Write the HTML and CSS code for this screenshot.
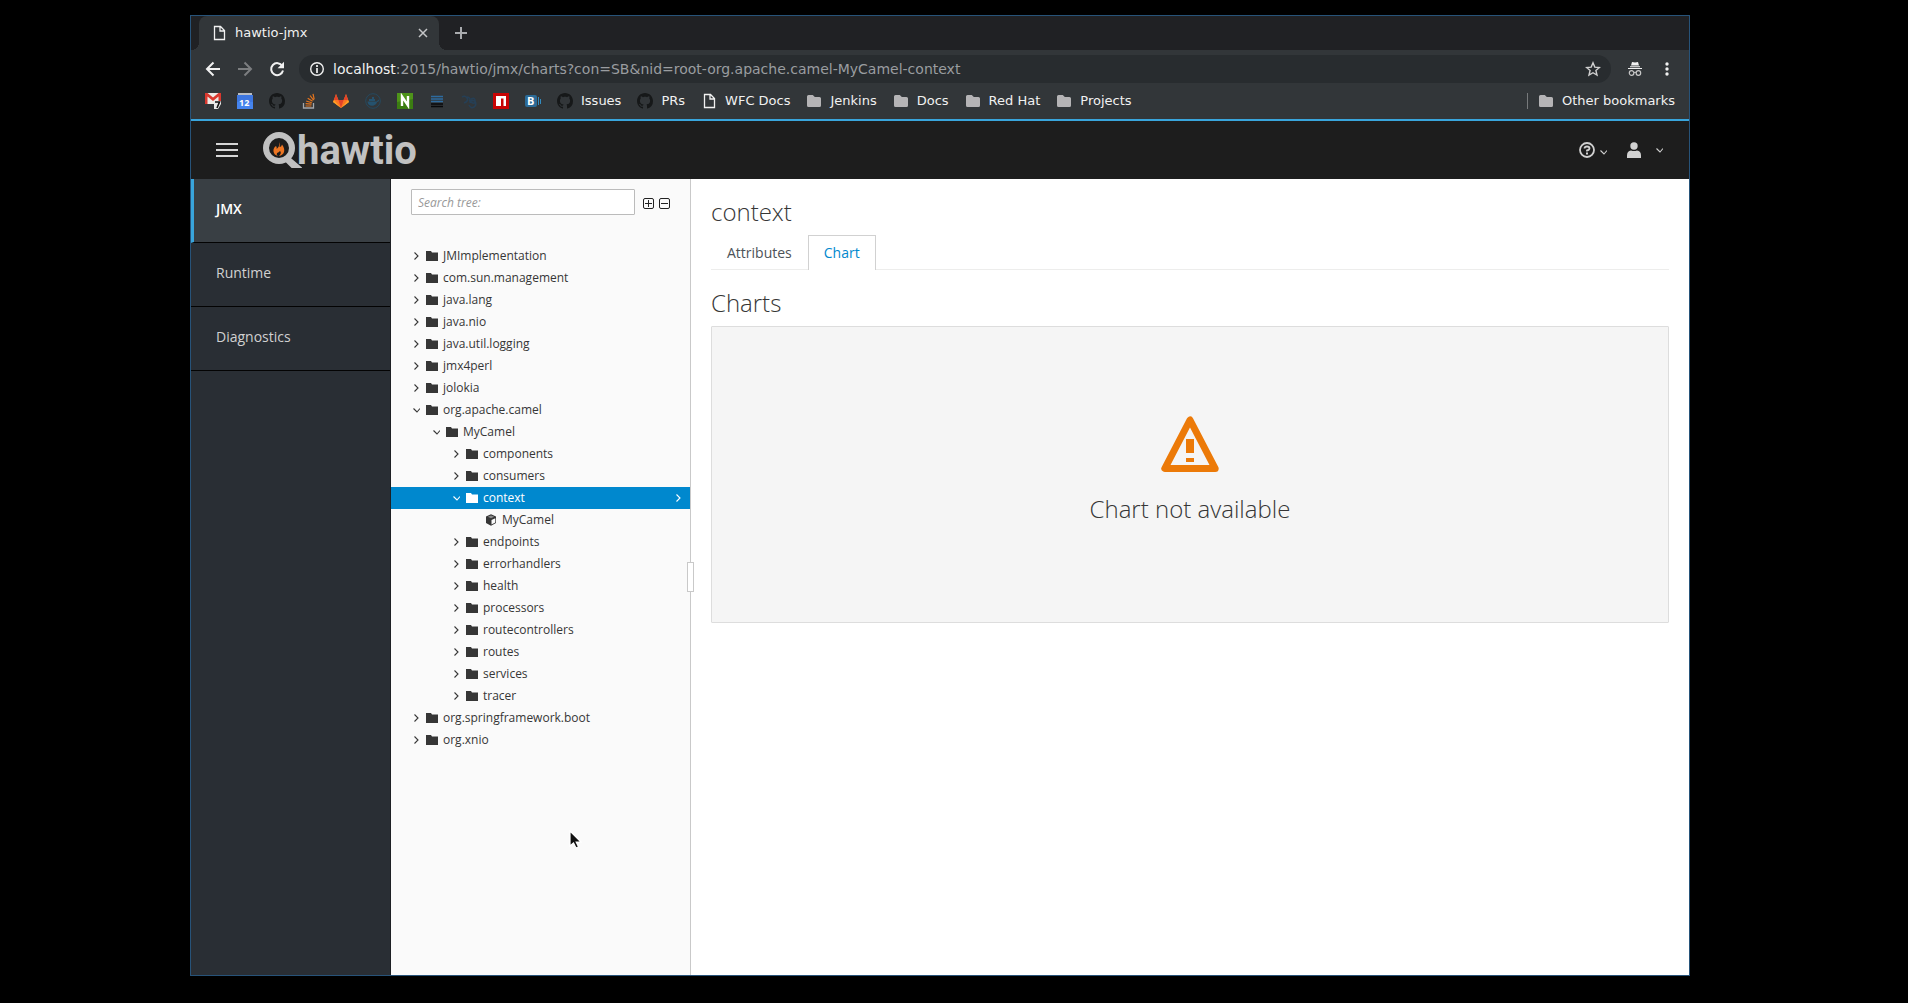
FILE: index.html
```html
<!DOCTYPE html>
<html lang="en">
<head>
<meta charset="utf-8">
<title>hawtio-jmx</title>
<link rel="stylesheet" href="styles.css">
</head>
<body>
<svg class="defs" aria-hidden="true">
  <symbol id="right" viewBox="0 0 8 12"><path d="M2.500 2.500L6 6L2.500 9.500" fill="none" stroke="currentColor" stroke-width="1.100"/></symbol>
  <symbol id="down" viewBox="0 0 8 12"><path d="M1.500 4.500L5 8L8 4.500" fill="none" stroke="currentColor" stroke-width="1.100"/></symbol>
  <symbol id="folder" viewBox="0 0 12 12"><path d="M0 1h5l1 1.500h6V11H0z" fill="currentColor"/></symbol>
  <symbol id="bfolder" viewBox="0 0 16 16"><path d="M2.500 2h4.300l2 2h4.700q1.500 0 1.500 1.500v7q0 1.500-1.500 1.500h-11Q1 14 1 12.500v-9Q1 2 2.500 2z" fill="#b5b4b6"/></symbol>
  <symbol id="page" viewBox="0 0 16 16"><path d="M3.500 1.500h6l4 4v9h-10zM9 1.500v4.500h4.500" fill="none" stroke="#f1f1f1" stroke-width="1.300"/></symbol>
  <symbol id="github" viewBox="0 0 16 16"><path fill="#161819" d="M8 0C3.580 0 0 3.580 0 8c0 3.540 2.290 6.530 5.470 7.590.4.070.55-.17.55-.38 0-.19-.01-.82-.01-1.490-2.010.37-2.530-.49-2.690-.94-.09-.23-.48-.94-.82-1.130-.28-.15-.68-.52-.01-.53.63-.01 1.080.58 1.230.82.72 1.210 1.870.87 2.330.66.07-.52.28-.87.51-1.070-1.780-.2-3.640-.89-3.640-3.950 0-.87.31-1.590.82-2.150-.08-.2-.36-1.020.08-2.120 0 0 .67-.21 2.200.82.64-.18 1.320-.27 2-.27s1.360.09 2 .27c1.530-1.040 2.200-.82 2.200-.82.44 1.100.16 1.920.08 2.120.51.56.82 1.270.82 2.150 0 3.070-1.870 3.750-3.650 3.950.29.25.54.73.54 1.480 0 1.070-.01 1.930-.01 2.200 0 .21.15.46.55.38A8.010 8.010 0 0 0 16 8c0-4.420-3.580-8-8-8z"/></symbol>
</svg>

<div class="window">
  <header class="chrome">
    <div class="tabstrip">
      <div class="browser-tab">
        <svg class="i16"><use href="#page"/></svg>
        <span class="tab-title">hawtio-jmx</span>
        <button class="plain" aria-label="Close tab"><svg width="10" height="10" viewBox="0 0 10 10"><path d="M1 1l8 8M9 1L1 9" stroke="#c5c6c8" stroke-width="1.500"/></svg></button>
      </div>
      <button class="plain new-tab" aria-label="New tab"><svg width="12" height="12" viewBox="0 0 12 12"><path d="M6 0v12M0 6h12" stroke="#a9abae" stroke-width="2"/></svg></button>
    </div>
    <div class="toolbar">
      <button class="plain" aria-label="Back"><svg class="i16" viewBox="0 0 16 16"><path d="M15 8H2.500M8.500 1.500L2 8l6.500 6.500" fill="none" stroke="#f1f1f1" stroke-width="2"/></svg></button>
      <button class="plain" aria-label="Forward"><svg class="i16" viewBox="0 0 16 16"><path d="M1 8h12.500M7.500 1.500L14 8l-6.500 6.500" fill="none" stroke="#7c7e80" stroke-width="2"/></svg></button>
      <button class="plain" aria-label="Reload"><svg class="i16" viewBox="0 0 16 16"><path d="M13.300 5A6 6 0 1 0 14 9.500" fill="none" stroke="#f1f1f1" stroke-width="2"/><path d="M15 .8v6.400H8.600z" fill="#f1f1f1"/></svg></button>
      <div class="omnibox">
        <svg class="i16" viewBox="0 0 16 16"><circle cx="8" cy="8" r="6.300" fill="none" stroke="#f1f1f1" stroke-width="1.400"/><path d="M8 7v5M8 4v2" stroke="#f1f1f1" stroke-width="1.700"/></svg>
        <span class="url"><b>localhost</b>:2015/hawtio/jmx/charts?con=SB&amp;nid=root-org.apache.camel-MyCamel-context</span>
        <button class="plain" aria-label="Bookmark this page"><svg class="i16" viewBox="0 0 16 16"><path d="M8 1.800l1.800 4.300 4.600.4-3.500 3 1.100 4.600L8 11.700l-4 2.400 1.100-4.600-3.500-3 4.600-.4z" fill="none" stroke="#d0d0d0" stroke-width="1.400"/></svg></button>
      </div>
      <svg class="i16" viewBox="0 0 16 16"><path d="M5 1l3 .6L11 1l1 3.500H4zM3 5.200h10v1H3zM1 7h14v1H1z" fill="#f1f1f1"/><circle cx="4.600" cy="12" r="2.300" fill="none" stroke="#c8c8c8" stroke-width="1.200"/><circle cx="11.400" cy="12" r="2.300" fill="none" stroke="#c8c8c8" stroke-width="1.200"/><path d="M6.800 11.600q1.200-.8 2.400 0" stroke="#c8c8c8" fill="none"/></svg>
      <button class="plain" aria-label="Menu"><svg class="i16" viewBox="0 0 16 16"><g fill="#f1f1f1"><circle cx="8" cy="3" r="1.700"/><circle cx="8" cy="8" r="1.700"/><circle cx="8" cy="13" r="1.700"/></g></svg></button>
    </div>
    <nav class="bookmarks" aria-label="Bookmarks">
      <a href="#" aria-label="Mail"><svg class="i16" viewBox="0 0 16 16"><path d="M0 0h16v11H0z" fill="#eceae6"/><path d="M0 0h2.500L8 4.500 13.500 0H16v11h-2.500V3.500L8 8 2.500 3.500V11H0z" fill="#d9382e"/><path d="M9 8h7v3l-3 5H9z" fill="#e9e9e9"/><path d="M10 9h4.500l-2.500 6" stroke="#111" stroke-width="1.600" fill="none"/></svg></a>
      <a href="#" aria-label="Calendar"><svg class="i16" viewBox="0 0 16 16"><path d="M1 0h14v3H1z" fill="#b9bcc2"/><path d="M0 2h16v14H0z" fill="#3d76e0"/><path d="M0 9h16v7H0z" fill="#4584ee"/><text class="cal" x="2" y="13">12</text></svg></a>
      <a href="#" aria-label="GitHub"><svg class="i16"><use href="#github"/></svg></a>
      <a href="#" aria-label="Stack Overflow"><svg class="i16" viewBox="0 0 16 16"><path d="M2.500 10v5h10v-5" fill="none" stroke="#a4a7aa" stroke-width="1.300"/><path d="M4.500 13h6M4.600 10.600l6 .6M5.200 8l5.600 1.700M6.700 5.200l4.900 3M9 2.500l3.600 4.700M12 .8l1.200 5.600" stroke="#e7751c" stroke-width="1.200"/></svg></a>
      <a href="#" aria-label="GitLab"><svg class="i16" viewBox="0 0 16 16"><path d="M8 15L0 9l3-8 2.400 6h5.200L13 1l3 8z" fill="#fc7424"/><path d="M5.400 7h5.200L8 15z" fill="#e24329"/><path d="M3 1l2.400 6H1zM13 1l-2.400 6H15z" fill="#e24329"/><path d="M0 9l1-2 7 8zM16 9l-1-2-7 8z" fill="#fca326"/></svg></a>
      <a href="#" aria-label="Docker"><svg class="i16" viewBox="0 0 16 16"><circle cx="8" cy="8" r="7.300" fill="none" stroke="#25495f"/><path d="M2.500 8.500h9q1.200 0 1.500-2 1 .6 1 1.300-.7 1.200-1.900 1.200-1.500 3.800-5 3.800-4.200 0-4.600-4.300zM4 6h6v2H4zM7 4h2v2H7z" fill="#25526e"/></svg></a>
      <a href="#" aria-label="Nexus"><svg class="i16" viewBox="0 0 16 16"><path d="M0 0h16v16H0z" fill="#4e941a"/><path d="M0 9l16-3v10H0z" fill="#3b7d12"/><path d="M5 13V3.500l6 9V3" fill="none" stroke="#fff" stroke-width="2.400"/></svg></a>
      <a href="#" aria-label="Lists"><svg class="i16" viewBox="0 0 16 16"><path d="M2 3.500h12M2 6h12M2 8.500h12" stroke="#2e6b9f" stroke-width="1.400"/><path d="M2 11h12M2 13.500h12" stroke="#08090b" stroke-width="1.400"/></svg></a>
      <a href="#" aria-label="Wiki"><svg class="i16" viewBox="0 0 16 16"><path d="M1 4q3-2 5 1t-3 5M6 4q4 0 3 6M10 6q4-2 4 2t-4 1 4-1q2 4-1 6t-5-2" fill="none" stroke="#263f55" stroke-width="1.600"/></svg></a>
      <a href="#" aria-label="npm"><svg class="i16" viewBox="0 0 16 16"><path d="M0 0h16v16H0z" fill="#c80404"/><path d="M3 3h10v10h-2.500V5.500H8V13H3z" fill="#fff"/></svg></a>
      <a href="#" aria-label="Blog"><svg class="i16" viewBox="0 0 16 16"><rect y="2" width="12" height="12" rx="2" fill="#2b6b98"/><path d="M13 4h1v8h-1zM15 6h1v5h-1z" fill="#328bc0"/><text class="blog" x="2" y="12">B</text></svg></a>
      <a href="#"><svg class="i16"><use href="#github"/></svg>Issues</a>
      <a href="#"><svg class="i16"><use href="#github"/></svg>PRs</a>
      <a href="#"><svg class="i16"><use href="#page"/></svg>WFC Docs</a>
      <a href="#"><svg class="i16"><use href="#bfolder"/></svg>Jenkins</a>
      <a href="#"><svg class="i16"><use href="#bfolder"/></svg>Docs</a>
      <a href="#"><svg class="i16"><use href="#bfolder"/></svg>Red Hat</a>
      <a href="#"><svg class="i16"><use href="#bfolder"/></svg>Projects</a>
      <a href="#" class="other"><svg class="i16"><use href="#bfolder"/></svg>Other bookmarks</a>
    </nav>
  </header>

  <div class="masthead">
    <button class="plain" aria-label="Toggle navigation"><svg width="22" height="14" viewBox="0 0 22 14"><path d="M0 1h22M0 7h22M0 13h22" stroke="#d6d6d6" stroke-width="2"/></svg></button>
    <a href="#" class="brand">
      <svg width="39" height="36" viewBox="0 0 39 36"><circle cx="16" cy="16" r="13" fill="none" stroke="#c1c1c1" stroke-width="6"/><path d="M24 24l13 11H29l-7-7z" fill="#c1c1c1" stroke="#c1c1c1" stroke-width="2"/><path d="M31 23l8 9" stroke="#1d1d1d" stroke-width="1"/><path d="M16 9q2 3 .5 6 2 0 2.500-2.500 3 4 2 7.500-1 3-5 4 3-3 1-5-2 2-3 2-1 2 1 3-4-1-4.500-4.500Q10 16 13 14q1 1 .7 3Q18 13 16 9z" fill="#ee7623"/></svg>
      <span>hawtio</span>
    </a>
    <div class="utilities">
      <button class="plain help" aria-label="Help"><svg class="i16" viewBox="0 0 16 16"><circle cx="8" cy="8" r="7" fill="none" stroke="#d1d1d1" stroke-width="1.800"/><path d="M5.500 6.500Q5.500 4.500 8 4.500t2.500 1.800Q10.500 8 8 8.500v1" fill="none" stroke="#d1d1d1" stroke-width="1.800"/><path d="M7 10.500h2v2H7z" fill="#d1d1d1"/></svg><svg class="caret low"><use href="#down"/></svg></button>
      <button class="plain user" aria-label="User"><svg width="14" height="16" viewBox="0 0 14 16"><circle cx="7" cy="4" r="3.700" fill="#d1d1d1"/><path d="M0 16v-2.500Q0 9 4 8.500q3 1 6 0 4 .5 4 5V16z" fill="#d1d1d1"/></svg><svg class="caret"><use href="#down"/></svg></button>
    </div>
  </div>

  <div class="app">
    <nav class="sidebar" aria-label="Main">
      <a href="#" class="active">JMX</a>
      <a href="#">Runtime</a>
      <a href="#">Diagnostics</a>
    </nav>

    <aside class="tree-pane">
      <div class="search">
        <input type="text" placeholder="Search tree:" aria-label="Search tree">
        <button class="plain" aria-label="Expand all"><svg width="11" height="11" viewBox="0 0 11 11"><rect x=".5" y=".5" width="10" height="10" rx="1.500" fill="none" stroke="#222"/><path d="M5.500 2v7M2 5.500h7" stroke="#222"/></svg></button>
        <button class="plain" aria-label="Collapse all"><svg width="11" height="11" viewBox="0 0 11 11"><rect x=".5" y=".5" width="10" height="10" rx="1.500" fill="none" stroke="#222"/><path d="M2 5.500h7" stroke="#222"/></svg></button>
      </div>
      <ul class="tree">
        <li><svg class="caret"><use href="#right"/></svg><svg class="node"><use href="#folder"/></svg>JMImplementation</li>
        <li><svg class="caret"><use href="#right"/></svg><svg class="node"><use href="#folder"/></svg>com.sun.management</li>
        <li><svg class="caret"><use href="#right"/></svg><svg class="node"><use href="#folder"/></svg>java.lang</li>
        <li><svg class="caret"><use href="#right"/></svg><svg class="node"><use href="#folder"/></svg>java.nio</li>
        <li><svg class="caret"><use href="#right"/></svg><svg class="node"><use href="#folder"/></svg>java.util.logging</li>
        <li><svg class="caret"><use href="#right"/></svg><svg class="node"><use href="#folder"/></svg>jmx4perl</li>
        <li><svg class="caret"><use href="#right"/></svg><svg class="node"><use href="#folder"/></svg>jolokia</li>
        <li><svg class="caret"><use href="#down"/></svg><svg class="node"><use href="#folder"/></svg>org.apache.camel</li>
        <li class="l2"><svg class="caret"><use href="#down"/></svg><svg class="node"><use href="#folder"/></svg>MyCamel</li>
        <li class="l3"><svg class="caret"><use href="#right"/></svg><svg class="node"><use href="#folder"/></svg>components</li>
        <li class="l3"><svg class="caret"><use href="#right"/></svg><svg class="node"><use href="#folder"/></svg>consumers</li>
        <li class="l3 selected"><svg class="caret"><use href="#down"/></svg><svg class="node"><use href="#folder"/></svg>context<svg class="caret go"><use href="#right"/></svg></li>
        <li class="l4"><svg class="node" viewBox="0 0 12 12"><path d="M6 .3l5 2.200v6.500L6 11.700 1 9V2.500z" fill="#363636"/><path d="M6.500 6l3.800-1.800v4.200L6.500 10.500z" fill="#fafafa"/><path d="M6 1.400l3.300 1.400L6 4.300 2.700 2.800z" fill="#8a8a8a"/></svg>MyCamel</li>
        <li class="l3"><svg class="caret"><use href="#right"/></svg><svg class="node"><use href="#folder"/></svg>endpoints</li>
        <li class="l3"><svg class="caret"><use href="#right"/></svg><svg class="node"><use href="#folder"/></svg>errorhandlers</li>
        <li class="l3"><svg class="caret"><use href="#right"/></svg><svg class="node"><use href="#folder"/></svg>health</li>
        <li class="l3"><svg class="caret"><use href="#right"/></svg><svg class="node"><use href="#folder"/></svg>processors</li>
        <li class="l3"><svg class="caret"><use href="#right"/></svg><svg class="node"><use href="#folder"/></svg>routecontrollers</li>
        <li class="l3"><svg class="caret"><use href="#right"/></svg><svg class="node"><use href="#folder"/></svg>routes</li>
        <li class="l3"><svg class="caret"><use href="#right"/></svg><svg class="node"><use href="#folder"/></svg>services</li>
        <li class="l3"><svg class="caret"><use href="#right"/></svg><svg class="node"><use href="#folder"/></svg>tracer</li>
        <li><svg class="caret"><use href="#right"/></svg><svg class="node"><use href="#folder"/></svg>org.springframework.boot</li>
        <li><svg class="caret"><use href="#right"/></svg><svg class="node"><use href="#folder"/></svg>org.xnio</li>
      </ul>
      <div class="grip"></div>
      <svg class="pointer" width="14" height="20" viewBox="0 0 14 20"><path d="M1 1v15l3.500-3 2.500 5 2.500-1.200L7.200 12H12z" fill="#111" stroke="#fff" stroke-width="1.200"/></svg>
    </aside>

    <main class="content">
      <h1>context</h1>
      <nav class="tabs" aria-label="Views">
        <a href="#">Attributes</a>
        <a href="#" class="active">Chart</a>
      </nav>
      <h2>Charts</h2>
      <section class="blank">
        <svg width="58" height="57" viewBox="0 0 58 57"><path d="M29 4L3.800 52.500h50.400z" fill="none" stroke="#ec7a08" stroke-width="7" stroke-linejoin="round"/><path d="M25 23h8v14h-8zM25 42h8v4h-8z" fill="#ec7a08"/></svg>
        <p>Chart not available</p>
      </section>
    </main>
  </div>
</div>
</body>
</html>
```
FILE: styles.css
```css
* { box-sizing: border-box; }

body {
  margin: 0;
  min-height: 100vh;
  padding: 15px 218px 27px 190px;
  display: flex;
  background: #000;
  font-family: "Open Sans", sans-serif;
  font-size: 12px;
  color: #363636;
}

svg { display: block; flex: none; }
.defs { position: absolute; width: 0; height: 0; }
.i16 { width: 16px; height: 16px; }
a { text-decoration: none; color: inherit; }

.plain {
  display: flex;
  align-items: center;
  padding: 0;
  border: 0;
  background: none;
  color: inherit;
}

.window {
  flex: 1;
  min-width: 0;
  display: flex;
  flex-direction: column;
  border: 1px solid #275379;
}

/* Browser chrome */
.chrome {
  background: #323639;
  color: #f1f1f1;
  font-family: "DejaVu Sans", sans-serif;
  font-size: 13px;
}

.tabstrip {
  display: flex;
  height: 34px;
  padding-left: 8px;
  background: #202124;
}

.browser-tab {
  position: relative;
  display: flex;
  align-items: center;
  gap: 8px;
  width: 240px;
  padding: 0 11px 0 12px;
  border-radius: 8px 8px 0 0;
  background: #323639;
}

.browser-tab::before,
.browser-tab::after {
  content: "";
  position: absolute;
  bottom: 0;
  width: 8px;
  height: 8px;
}
.browser-tab::before { right: 100%; background: radial-gradient(circle at 0 0, #202124 8px, #323639 8px); }
.browser-tab::after { left: 100%; background: radial-gradient(circle at 100% 0, #202124 8px, #323639 8px); }

.tab-title { flex: 1; padding-bottom: 2px; }
.new-tab { padding: 0 16px; }

.toolbar {
  display: flex;
  align-items: center;
  gap: 16px;
  padding: 5px 14px 4px;
}

.omnibox {
  flex: 1;
  display: flex;
  align-items: center;
  gap: 8px;
  height: 28px;
  margin-left: -2px;
  padding: 0 10px;
  border-radius: 14px;
  background: #282c2f;
  font-size: 14px;
}

.url { flex: 1; color: #9a9da0; }
.url b { font-weight: 400; color: #f1f1f1; }

.bookmarks {
  display: flex;
  align-items: center;
  gap: 16px;
  height: 32px;
  padding: 0 14px 5px;
}
.bookmarks a { display: flex; align-items: center; gap: 8px; white-space: nowrap; }
.bookmarks .other { margin-left: auto; padding-left: 10px; border-left: 1px solid #777a7c; }
.cal { font: 700 9px "Open Sans", sans-serif; fill: #fff; }
.blog { font: 700 11px "Open Sans", sans-serif; fill: #fff; }

/* Application header */
.masthead {
  display: flex;
  align-items: center;
  height: 60px;
  padding: 0 26px 0 25px;
  border-top: 2px solid #39a5dc;
  background: #1d1d1d;
}

.brand {
  display: flex;
  align-items: center;
  margin-left: 25px;
  color: #c1c1c1;
  font: 700 40px/40px Roboto, sans-serif;
}
.brand span { margin-left: -5px; padding-top: 2px; }

.utilities { display: flex; gap: 20px; margin-left: auto; color: #d1d1d1; }
.help { gap: 4px; }
.user { gap: 14px; }
.caret { width: 8px; height: 12px; }
.low { margin-top: 4px; }

.app { flex: 1; display: flex; }

.sidebar {
  width: 200px;
  background: #292e34;
  border-right: 1px solid #1d2024;
  font-size: 14px;
}
.sidebar a {
  display: flex;
  align-items: center;
  height: 64px;
  padding: 0 0 4px 25px;
  border-bottom: 1px solid #030303;
  color: #d1d1d1;
}
.sidebar .active {
  padding-left: 22px;
  border-left: 3px solid #39a5dc;
  background: #393f44;
  color: #fff;
  font-weight: 600;
}

/* Tree */
.tree-pane {
  position: relative;
  width: 300px;
  padding-top: 10px;
  border-right: 1px solid #c9c9c9;
  background: #fafafa;
}

.search { display: flex; align-items: center; gap: 5px; padding-left: 20px; }
.search input {
  width: 224px;
  height: 26px;
  margin-right: 3px;
  padding: 0 6px;
  border: 1px solid #bbb;
  border-radius: 1px;
  background: #fff;
  font: 12px "Open Sans", sans-serif;
}
.search .plain { padding-top: 2px; }
.search input::placeholder { color: #999; font-style: italic; }

.tree { margin: 30px 0 0; padding: 0; list-style: none; }
.tree li {
  display: flex;
  align-items: center;
  height: 22px;
  padding: 0 0 1px 21px;
}
.tree .l2 { padding-left: 41px; }
.tree .l3 { padding-left: 61px; }
.tree .l4 { padding-left: 94px; }
.tree .selected { background: #0088ce; color: #fff; }
.node { width: 12px; height: 12px; margin: 0 5px 0 6px; }
.l4 .node { margin-left: 0; }
.go { margin: 0 8px 0 auto; }

.grip {
  position: absolute;
  top: calc(50% - 15px);
  right: -4px;
  width: 7px;
  height: 30px;
  border: 1px solid #c9c9c9;
  background: #fff;
}
.pointer { position: absolute; left: 178px; top: 651px; }

/* Content */
.content { flex: 1; min-width: 0; padding: 20px; background: #fff; }

h1, h2, .blank p {
  margin: 0;
  font-size: 24px;
  line-height: 26px;
  font-weight: 300;
}

.tabs { display: flex; margin-top: 10px; border-bottom: 1px solid #ededec; font-size: 14px; }
.tabs a {
  height: 34px;
  margin-bottom: -1px;
  padding: 0 15px;
  border: 1px solid transparent;
  border-bottom: 0;
  line-height: 34px;
  color: #4d5258;
}
.tabs .active { height: 35px; border-color: #d1d1d1; background: #fff; color: #0088ce; }

h2 { margin: 20px 0 10px; }

.blank {
  display: flex;
  flex-direction: column;
  align-items: center;
  gap: 23px;
  padding: 89px 20px 100px;
  border: 1px solid #ddd;
  border-radius: 1px;
  background: #f5f5f5;
}
```
